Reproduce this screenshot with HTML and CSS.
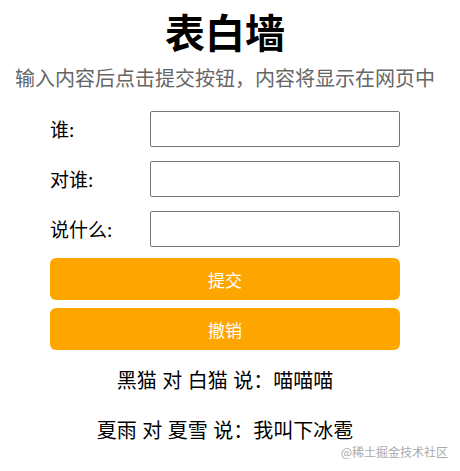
FILE: index.html
```html
<!DOCTYPE html>
<html lang="zh">
<head>
<meta charset="utf-8">
<title>表白墙</title>
<link rel="stylesheet" href="styles.css">
</head>
<body>
<div class="page">
  <div class="wall">
    <h1 class="title">表白墙</h1>
    <p class="hint">输入内容后点击提交按钮，内容将显示在网页中</p>
    <div class="row"><span class="label">谁:</span><input class="field" type="text"></div>
    <div class="row"><span class="label">对谁:</span><input class="field" type="text"></div>
    <div class="row"><span class="label">说什么:</span><input class="field" type="text"></div>
    <button class="btn btn-submit">提交</button>
    <button class="btn">撤销</button>
    <div class="msg msg-first">黑猫 对 白猫 说：喵喵喵</div>
    <div class="msg">夏雨 对 夏雪 说：我叫下冰雹</div>
  </div>
  <div class="mark">@稀土掘金技术社区</div>
</div>
</body>
</html>
```

FILE: styles.css
```css
html, body {
  margin: 0;
  padding: 0;
  background: #fff;
}
body {
  font-family: "Noto Sans CJK SC", "Noto Sans", sans-serif;
  color: #000;
}
.page {
  width: 460px;
  height: 471px;
  position: relative;
  overflow: hidden;
}
.wall {
  width: 350px;
  margin-left: 50px;
  display: flex;
  flex-direction: column;
}
.title {
  margin: 6px 0 0;
  font-size: 40px;
  line-height: 50px;
  font-weight: 700;
  text-align: center;
}
.hint {
  margin: 5px -50px 0;
  font-size: 20px;
  line-height: 34px;
  color: #666;
  text-align: center;
}
.row {
  display: flex;
  align-items: center;
  height: 36px;
  margin-top: 14px;
}
.row:first-of-type {
  margin-top: 16px;
}
.label {
  width: 100px;
  font-size: 19px;
  line-height: 36px;
}
.field {
  box-sizing: border-box;
  width: 250px;
  height: 36px;
  margin: 0;
  border: 1px solid #767676;
  border-radius: 2px;
  padding: 0 6px;
  font-size: 16px;
}
.btn {
  box-sizing: border-box;
  width: 350px;
  height: 42px;
  margin-top: 8px;
  border: none;
  border-radius: 6px;
  background: #ffa500;
  color: #fff;
  font-family: "Noto Sans CJK SC", sans-serif;
  font-size: 17px;
  padding: 0;
}
.btn-submit {
  margin-top: 11px;
}
.msg {
  margin-top: 14px;
  font-size: 20px;
  line-height: 36px;
  text-align: center;
  word-spacing: 1px;
}
.msg-first {
  margin-top: 12px;
}
.mark {
  position: absolute;
  right: 12px;
  bottom: 11px;
  font-size: 12px;
  color: #aaa;
}
```
